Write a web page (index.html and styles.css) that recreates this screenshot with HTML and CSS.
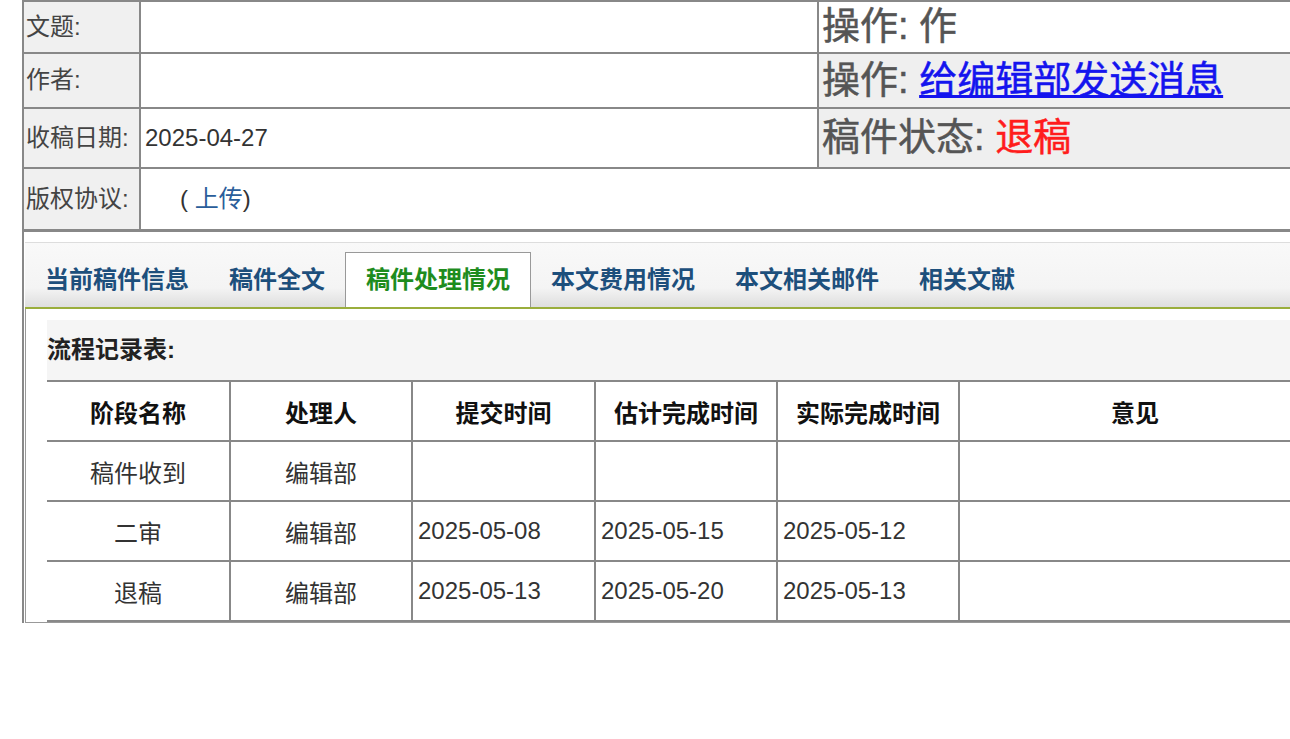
FILE: index.html
```html
<!DOCTYPE html>
<html lang="zh-CN">

<head>
    <meta charset="UTF-8">
    <meta name="viewport" content="width=device-width, initial-scale=1">
    <title>稿件处理情况</title>
    <link rel="stylesheet" href="styles.css">
</head>

<body>

    <div class="page">
        <table class="info">
            <colgroup>
                <col class="c-label">
                <col class="c-value">
                <col class="c-side">
            </colgroup>
            <tr class="row-title">
                <td class="label">文题:</td>
                <td class="value"></td>
                <td class="side side-plain">操作: 作</td>
            </tr>
            <tr class="row-author">
                <td class="label">作者:</td>
                <td class="value"></td>
                <td class="side">操作: <a href="#" class="msg-link">给编辑部发送消息</a></td>
            </tr>
            <tr class="row-date">
                <td class="label">收稿日期:</td>
                <td class="value">2025-04-27</td>
                <td class="side">稿件状态: <span class="status">退稿</span></td>
            </tr>
            <tr class="row-copy">
                <td class="label">版权协议:</td>
                <td class="value copyright" colspan="2">( <a href="#" class="upload-link">上传</a>)</td>
            </tr>
        </table>

        <div class="tabs">
            <div class="tab">当前稿件信息</div>
            <div class="tab">稿件全文</div>
            <div class="tab active">稿件处理情况</div>
            <div class="tab">本文费用情况</div>
            <div class="tab">本文相关邮件</div>
            <div class="tab">相关文献</div>
        </div>

        <div class="panel">
            <div class="panel-title">流程记录表:</div>
            <table class="flow">
                <colgroup>
                    <col class="c1">
                    <col class="c2">
                    <col class="c3">
                    <col class="c4">
                    <col class="c5">
                    <col class="c6">
                </colgroup>
                <tr>
                    <th>阶段名称</th>
                    <th>处理人</th>
                    <th>提交时间</th>
                    <th>估计完成时间</th>
                    <th>实际完成时间</th>
                    <th>意见</th>
                </tr>
                <tr>
                    <td class="center">稿件收到</td>
                    <td class="center">编辑部</td>
                    <td></td>
                    <td></td>
                    <td></td>
                    <td></td>
                </tr>
                <tr>
                    <td class="center">二审</td>
                    <td class="center">编辑部</td>
                    <td>2025-05-08</td>
                    <td>2025-05-15</td>
                    <td>2025-05-12</td>
                    <td></td>
                </tr>
                <tr>
                    <td class="center">退稿</td>
                    <td class="center">编辑部</td>
                    <td>2025-05-13</td>
                    <td>2025-05-20</td>
                    <td>2025-05-13</td>
                    <td></td>
                </tr>
            </table>
        </div>
    </div>

</body>

</html>
```

FILE: styles.css
```css
body {
    margin: 0;
    font-family: "Liberation Sans", "Noto Sans CJK SC", sans-serif;
    background-color: #fff;
    overflow: hidden;
}

.page {
    margin-left: 22px;
    border-left: 2px solid #888;
    width: 1400px;
}

/* top info table */
.info {
    border-collapse: separate;
    border-spacing: 0;
    table-layout: fixed;
    width: 1376px;
    border-top: 2px solid #888;
}

.c-label {
    width: 117px;
}

.c-value {
    width: 678px;
}

.c-side {
    width: 581px;
}

.info td {
    border-right: 2px solid #888;
    border-bottom: 2px solid #888;
    padding: 0 4px;
    font-size: 24px;
    line-height: 1.2;
    color: #333;
    white-space: nowrap;
    overflow: hidden;
}

.row-title {
    height: 52px;
}

.row-author {
    height: 55px;
}

.row-date {
    height: 60px;
}

.row-copy {
    height: 63px;
}

.row-copy td {
    border-bottom-width: 3px;
}

.info .label {
    background-color: #f0f0f0;
    color: #444;
    padding-left: 2px;
}

.info .side {
    background-color: #efefef;
    font-size: 38px;
    color: #555;
    -webkit-text-stroke: 0.5px currentColor;
    border-right: none;
    padding-left: 3px;
}

.info .side-plain {
    background-color: #fff;
}

.msg-link {
    color: #1414ee;
    text-decoration: underline;
}

.status {
    color: #ff1c1c;
}

.info .copyright {
    padding-left: 39px;
    border-right: none;
}

.upload-link {
    color: #2a5d9a;
    text-decoration: none;
}

/* tabs */
.tabs {
    margin-top: 10px;
    margin-left: 1px;
    height: 64px;
    border-top: 1px solid #ddd;
    border-bottom: 2px solid #9aae3c;
    background: linear-gradient(#f9f9f9, #f4f4f4 70%, #dedede);
    display: flex;
    align-items: flex-end;
}

.tab {
    padding: 0 20px;
    height: 55px;
    line-height: 55px;
    font-size: 24px;
    font-weight: bold;
    color: #1d4f7c;
    white-space: nowrap;
}

.tab.active {
    height: 54px;
    line-height: 54px;
    background-color: #fff;
    color: #1e8c1e;
    border: 1px solid #999;
    border-bottom: none;
}

/* panel */
.panel {
    margin-left: 1px;
    border-left: 1px solid #999;
    border-bottom: 1px solid #999;
    padding: 11px 0 0 21px;
}

.panel-title {
    height: 60px;
    line-height: 60px;
    background-color: #f5f5f5;
    font-size: 24px;
    font-weight: bold;
    color: #222;
}

.flow {
    border-collapse: separate;
    border-spacing: 0;
    table-layout: fixed;
    width: 1265px;
    border-top: 2px solid #888;
}

.c1 {
    width: 184px;
}

.c2 {
    width: 182px;
}

.c3 {
    width: 183px;
}

.c4 {
    width: 182px;
}

.c5 {
    width: 182px;
}

.c6 {
    width: 352px;
}

.flow tr {
    height: 60px;
}

.flow th,
.flow td {
    border-right: 2px solid #888;
    border-bottom: 2px solid #888;
    padding: 0 5px;
    font-size: 24px;
    white-space: nowrap;
}

.flow th {
    font-weight: bold;
    color: #111;
    text-align: center;
}

.flow td {
    color: #333;
    text-align: left;
}

.flow td.center {
    text-align: center;
}
```
